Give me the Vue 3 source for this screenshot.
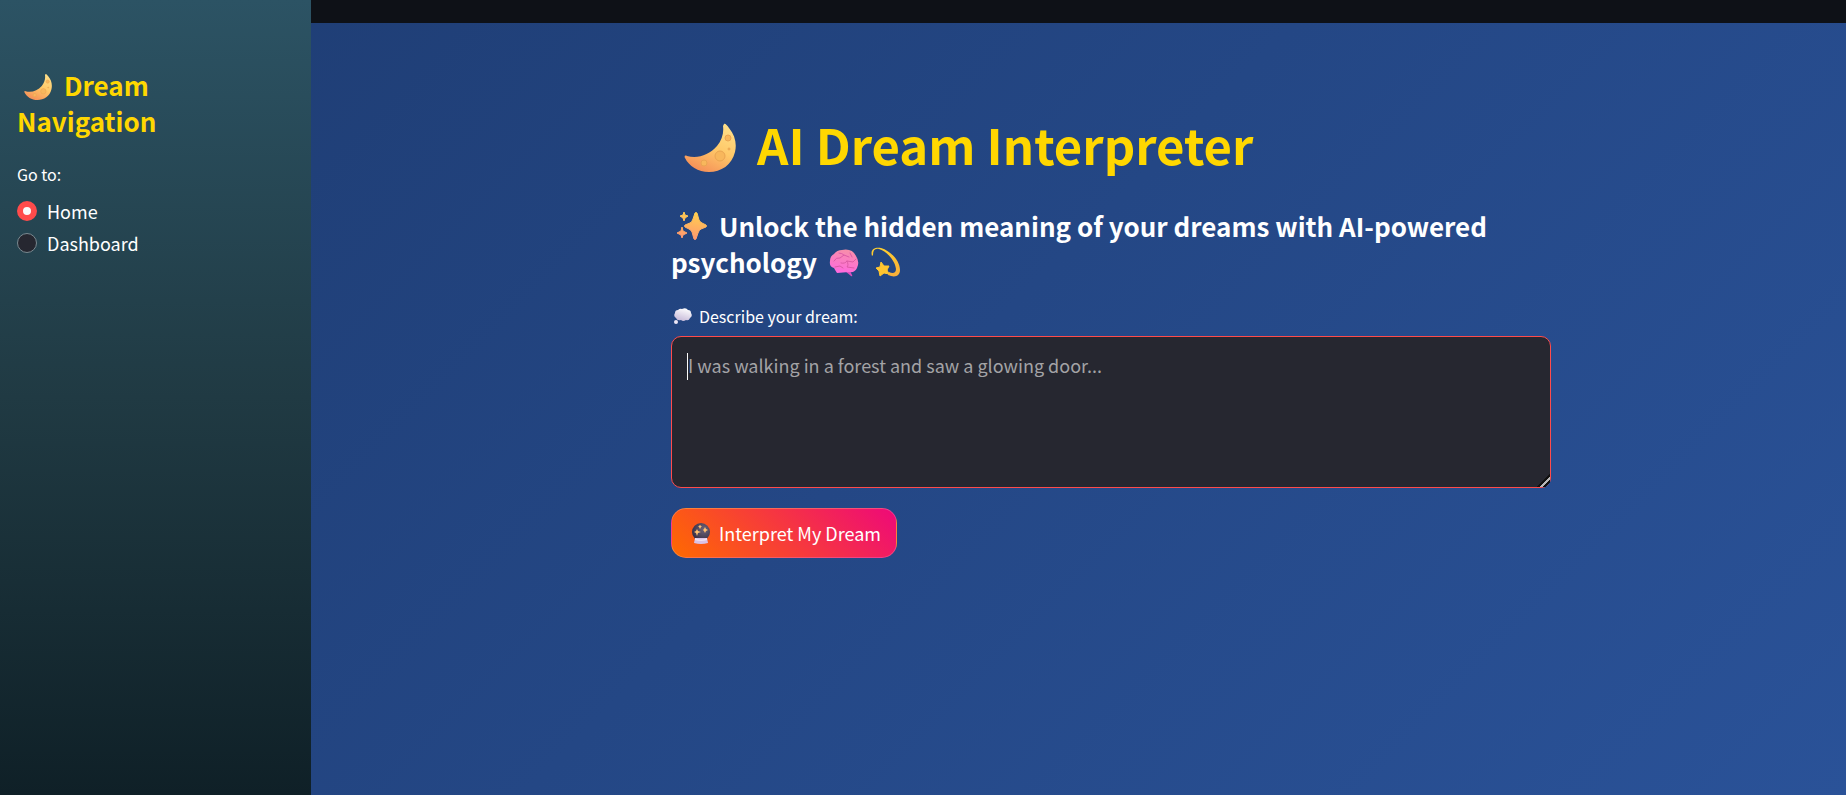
<script setup>
import { ref } from 'vue'

const page = ref('Home')
const pages = ['Home', 'Dashboard']
const dream = ref('')
</script>

<template>
  <div class="app">
    <svg class="defs" aria-hidden="true">
      <defs>
        <linearGradient id="gold" x1="0.8" y1="0" x2="0.3" y2="1">
          <stop offset="0" stop-color="#ffe08a" />
          <stop offset="0.5" stop-color="#ffc868" />
          <stop offset="1" stop-color="#f58f58" />
        </linearGradient>
        <linearGradient id="spark" x1="0.6" y1="0" x2="0.4" y2="1">
          <stop offset="0" stop-color="#ffd04f" />
          <stop offset="1" stop-color="#ff9670" />
        </linearGradient>
        <linearGradient id="star" x1="0.4" y1="0" x2="0.6" y2="1">
          <stop offset="0" stop-color="#ffcf2e" />
          <stop offset="1" stop-color="#f9b03a" />
        </linearGradient>
        <linearGradient id="pink" x1="0.6" y1="0" x2="0.4" y2="1">
          <stop offset="0" stop-color="#f78fa9" />
          <stop offset="1" stop-color="#ff69df" />
        </linearGradient>
        <linearGradient id="cloud" x1="0.7" y1="0" x2="0.3" y2="1">
          <stop offset="0" stop-color="#ffffff" />
          <stop offset="1" stop-color="#c5b8d8" />
        </linearGradient>
        <radialGradient id="orb" cx="0.65" cy="0.35" r="0.7">
          <stop offset="0" stop-color="#6d6478" />
          <stop offset="1" stop-color="#352d46" />
        </radialGradient>
        <symbol id="moon" viewBox="0 0 52 50">
          <path d="M40 1C41 0 43 2 45 5C51 12 53 21 51 29C48 42 37 49 25 49C14 49 5 43 1 35C0 33 1 32 3 33C14 36 25 32 33 23C38 17 40 10 39 3Z" fill="url(#gold)" />
          <g fill="#f8b75c" stroke="#eaa552" stroke-width="1">
            <circle cx="36" cy="33" r="5" />
            <circle cx="20" cy="40" r="3" />
            <circle cx="44" cy="15" r="3" />
            <circle cx="45" cy="26" r="1" />
          </g>
        </symbol>
        <symbol id="sparkles" viewBox="0 0 30 28">
          <path d="M18 1Q19 0 20 1L22 8Q23 10 25 11L29 13Q30 14 29 15L24 17Q22 18 21 21L19 27Q18 28 17 27L15 20Q14 18 12 17L8 15Q7 14 8 13L13 11Q15 10 16 7ZM7 0L8 3L11 4L8 6L7 9L6 6L3 4L6 3ZM5 15L6 19L10 21L6 23L5 26L4 23L0 21L4 19Z" fill="url(#spark)" stroke="url(#spark)" stroke-width="1" stroke-linejoin="round" />
        </symbol>
        <symbol id="brain" viewBox="0 0 30 28">
          <path d="M20 20L23 26Q24 28 22 27L16 22Z" fill="#d950c0" />
          <path d="M13 1Q23 -1 27 7Q31 13 28 19Q26 24 20 23L8 24Q6 21 5 19Q0 18 1 12Q1 7 5 5Q8 1 13 1Z" fill="url(#pink)" />
          <path d="M5 12Q7 8 11 9L15 6L20 8M10 4Q13 4 15 6M6 18L11 17L14 19M12 14Q16 15 18 12L24 13L27 10M18 12Q20 16 18 18L25 19M21 4L23 8" fill="none" stroke="#dc5ba6" stroke-width="1" stroke-linecap="round" />
        </symbol>
        <symbol id="dizzy" viewBox="0 0 30 30">
          <path d="M1 9C-1 2 4 0 10 1C20 4 29 14 29 23C29 29 24 31 17 28L18 25C22 27 25 26 25 22C24 13 15 4 8 2C4 1 2 3 2 8Z" fill="url(#star)" />
          <path d="M10 15L13 19L18 19L16 23L18 27L13 26L9 29L8 24L5 21L9 20Z" fill="#ffc52f" stroke="#ffc52f" stroke-width="1" stroke-linejoin="round" />
        </symbol>
        <symbol id="thought" viewBox="0 0 18 16">
          <path d="M4 2Q6 0 8 1Q12 -1 14 2Q17 2 17 5Q19 8 16 10Q15 13 12 12Q9 14 7 12Q3 13 2 10Q-1 8 1 5Q1 2 4 2Z" fill="url(#cloud)" />
          <circle cx="2" cy="14" r="2" fill="#eee8f6" />
        </symbol>
        <symbol id="crystal" viewBox="0 0 18 21">
          <circle cx="9" cy="9" r="9" fill="url(#orb)" />
          <path d="M3 15H15L16 20Q9 22 2 20Z" fill="#d9c2e6" />
          <path d="M3 15Q9 18 15 15L15 17Q9 19 3 17Z" fill="#f0e2f3" />
          <path d="M5 6L6 8L9 9L6 10L5 13L4 10L2 9L4 8ZM13 4L14 6L16 7L14 8L13 10L12 8L11 7L12 6ZM8 2L9 3L10 4L9 4L8 6L7 4L6 4L7 3Z" fill="#ffc070" />
        </symbol>
      </defs>
    </svg>

    <aside class="sidebar">
      <h2 class="nav-title">
        <svg class="emoji moon-small" aria-hidden="true"><use href="#moon" /></svg>Dream Navigation
      </h2>
      <fieldset class="nav">
        <legend>Go to:</legend>
        <label v-for="name in pages" :key="name" class="option">
          <input v-model="page" type="radio" name="page" :value="name" />
          <span>{{ name }}</span>
        </label>
      </fieldset>
    </aside>

    <div class="content">
      <header class="topbar"></header>
      <main class="main">
        <div class="column">
          <h1>
            <svg class="emoji moon-large" aria-hidden="true"><use href="#moon" /></svg>AI Dream Interpreter
          </h1>
          <h3>
            <svg class="emoji sparkles" aria-hidden="true"><use href="#sparkles" /></svg>Unlock the hidden meaning of your dreams with AI-powered psychology<svg class="emoji brain" aria-hidden="true"><use href="#brain" /></svg><svg class="emoji dizzy" aria-hidden="true"><use href="#dizzy" /></svg>
          </h3>
          <label class="field-label" for="dream">
            <svg class="thought" aria-hidden="true"><use href="#thought" /></svg>Describe your dream:
          </label>
          <div class="field">
            <textarea id="dream" v-model="dream" placeholder="I was walking in a forest and saw a glowing door..."></textarea>
            <span v-if="!dream" class="caret"></span>
          </div>
          <button type="button" class="submit">
            <svg class="crystal" aria-hidden="true"><use href="#crystal" /></svg>Interpret My Dream
          </button>
        </div>
      </main>
    </div>
  </div>
</template>

<style>
body {
  margin: 0;
  background: #0e1117;
}
</style>

<style scoped>
.app {
  display: flex;
  min-height: 100vh;
  background: linear-gradient(135deg, #1e3c72, #2a5298);
  color: #fff;
  font-family: "Noto Sans CJK SC", "Noto Sans", sans-serif;
  font-size: 18px;
}
.defs {
  position: absolute;
  width: 0;
  height: 0;
}
.sidebar {
  box-sizing: border-box;
  flex: 0 0 311px;
  padding: 67px 60px 20px 17px;
  background: linear-gradient(180deg, #2c5364, #203a43 50%, #0f2027);
}
h1, h2, h3 {
  margin: 0;
  font-weight: 700;
}
.nav-title {
  max-width: 200px;
  color: #ffd700;
  font-size: 26px;
  line-height: 36px;
}
.nav {
  display: flex;
  flex-direction: column;
  margin: 21px 0 0;
  padding: 0;
  border: 0;
}
.nav legend {
  padding: 0;
  margin-bottom: 7px;
  font-size: 16px;
  line-height: 28px;
}
.option {
  display: flex;
  align-items: center;
  gap: 10px;
  height: 32px;
}
.option input {
  appearance: none;
  box-sizing: border-box;
  width: 20px;
  height: 20px;
  margin: 0;
  border: 1px solid #7a8990;
  border-radius: 50%;
  background: #262730;
}
.option input:checked {
  border: 6px solid #ff4b4b;
  background: #fafafa;
}
.emoji {
  display: inline-block;
  overflow: visible;
}
.moon-small {
  width: 28px;
  height: 28px;
  margin: 0 12px 0 7px;
  vertical-align: -5px;
}
.content {
  display: flex;
  flex: 1;
  flex-direction: column;
  min-width: 0;
}
.topbar {
  height: 23px;
  background: #0e1117;
}
.main {
  flex: 1;
  padding: 88px 0 40px 65px;
}
.column {
  max-width: 880px;
  margin: 0 auto;
}
h1 {
  color: #ffd700;
  font-size: 49px;
  line-height: 66px;
}
.moon-large {
  width: 52px;
  height: 50px;
  margin: 0 21px 0 13px;
  vertical-align: -8px;
}
h3 {
  margin-top: 31px;
  font-size: 26px;
  line-height: 36px;
}
.sparkles {
  width: 30px;
  height: 28px;
  margin: 0 12px 0 6px;
  vertical-align: -3px;
}
.brain {
  width: 30px;
  height: 28px;
  margin: 0 12px;
  vertical-align: -4px;
}
.dizzy {
  width: 30px;
  height: 30px;
  vertical-align: -4px;
}
.field-label {
  display: flex;
  align-items: center;
  gap: 7px;
  margin-top: 22px;
  padding-left: 3px;
  font-size: 16px;
  line-height: 28px;
}
.thought {
  width: 18px;
  height: 16px;
}
.field {
  position: relative;
  margin-top: 6px;
}
textarea {
  display: block;
  box-sizing: border-box;
  width: 100%;
  height: 152px;
  padding: 14px 16px;
  border: 1px solid #ff4b4b;
  border-radius: 10px;
  outline: none;
  background: #262730;
  color: #fafafa;
  color-scheme: dark;
  font: inherit;
  line-height: 28px;
  resize: vertical;
}
textarea::placeholder {
  color: #a3a3a6;
  opacity: 1;
}
textarea::-webkit-resizer {
  background: linear-gradient(135deg, transparent 54%, #111 54% 64%, #b8b8b8 64% 75%, #111 75% 84%, transparent 84%);
}
.caret {
  position: absolute;
  top: 17px;
  left: 16px;
  width: 1px;
  height: 27px;
  background: #fafafa;
  pointer-events: none;
}
.submit {
  display: flex;
  align-items: center;
  gap: 9px;
  height: 50px;
  margin-top: 20px;
  padding: 0 15px 0 20px;
  border: 1px solid rgba(250, 250, 250, 0.2);
  border-radius: 15px;
  background: linear-gradient(45deg, #ff6a00, #ee0979);
  color: #fff;
  font: inherit;
  line-height: 28px;
}
.crystal {
  width: 18px;
  height: 21px;
}
</style>
